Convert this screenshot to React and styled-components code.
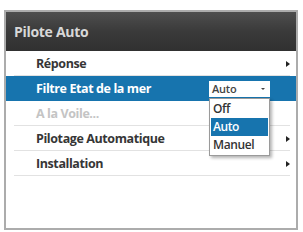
import styled, { createGlobalStyle } from "styled-components";

const Global = createGlobalStyle`
  body {
    margin: 0;
    background: #ffffff;
    font-family: "Open Sans", "DejaVu Sans", sans-serif;
  }
`;

const Frame = styled.div`
  margin: 10px 5px 0 4px;
  width: 294px;
  height: 220px;
  box-sizing: border-box;
  border: 2px solid #acacac;
  background: #ffffff;
`;

const TitleBar = styled.div`
  height: 39px;
  display: flex;
  align-items: center;
  padding-left: 8px;
  background: linear-gradient(#4e4e4e, #3a3a3a 50%, #303030);
  color: #d8d8d8;
  font-size: 14px;
  font-weight: 700;
  letter-spacing: -0.3px;
`;

const Menu = styled.div`
  display: flex;
  flex-direction: column;
`;

const Row = styled.div`
  position: relative;
  height: 25px;
  display: flex;
  align-items: center;
  justify-content: space-between;
  padding: 0 6px 0 30px;
  font-size: 12.5px;
  font-weight: 700;
  letter-spacing: -0.4px;
  color: ${(props) => (props.disabled ? "#c4c4c4" : "#363636")};
  background: ${(props) => (props.active ? "#1774ae" : "transparent")};
  ${(props) => props.active && "color: #ffffff;"}

  &::after {
    content: "";
    position: absolute;
    left: 8px;
    right: 6px;
    bottom: 0;
    height: 1px;
    background: ${(props) => (props.active ? "transparent" : "#e2e2e2")};
  }
`;

const Arrow = styled.span`
  width: 0;
  height: 0;
  border-top: 3px solid transparent;
  border-bottom: 3px solid transparent;
  border-left: 4px solid #222222;
`;

const SelectWrap = styled.div`
  position: relative;
  margin-right: 20px;
`;

const SelectBox = styled.div`
  width: 61px;
  height: 16px;
  box-sizing: border-box;
  background: #ffffff;
  display: flex;
  align-items: center;
  justify-content: space-between;
  padding: 0 5px 0 3px;
  color: #444444;
  font-size: 11px;
  font-weight: 600;
  letter-spacing: -0.2px;
`;

const Caret = styled.span`
  width: 0;
  height: 0;
  border-left: 2px solid transparent;
  border-right: 2px solid transparent;
  border-top: 2px solid #444444;
`;

const Options = styled.div`
  position: absolute;
  top: 17px;
  left: 0;
  width: 61px;
  box-sizing: border-box;
  border: 1px solid #9a9a9a;
  background: #ffffff;
  box-shadow: 2px 2px 3px rgba(0, 0, 0, 0.3);
  padding: 1px;
  z-index: 2;
`;

const Option = styled.div`
  height: 18px;
  display: flex;
  align-items: center;
  padding-left: 2px;
  font-size: 12px;
  font-weight: 600;
  letter-spacing: -0.4px;
  color: ${(props) => (props.selected ? "#ffffff" : "#333333")};
  background: ${(props) => (props.selected ? "#1774ae" : "transparent")};
`;

const items = [
  { label: "Réponse", arrow: true },
  { label: "Filtre Etat de la mer", active: true },
  { label: "A la Voile...", disabled: true },
  { label: "Pilotage Automatique", arrow: true },
  { label: "Installation", arrow: true },
];

const App = () => {
  return (
    <>
      <Global />
      <Frame>
        <TitleBar>Pilote Auto</TitleBar>
        <Menu>
          {items.map((item) => (
            <Row key={item.label} active={item.active} disabled={item.disabled}>
              <span>{item.label}</span>
              {item.arrow && <Arrow />}
              {item.active && (
                <SelectWrap>
                  <SelectBox>
                    Auto
                    <Caret />
                  </SelectBox>
                  <Options>
                    <Option>Off</Option>
                    <Option selected>Auto</Option>
                    <Option>Manuel</Option>
                  </Options>
                </SelectWrap>
              )}
            </Row>
          ))}
        </Menu>
      </Frame>
    </>
  );
};

export default App;
